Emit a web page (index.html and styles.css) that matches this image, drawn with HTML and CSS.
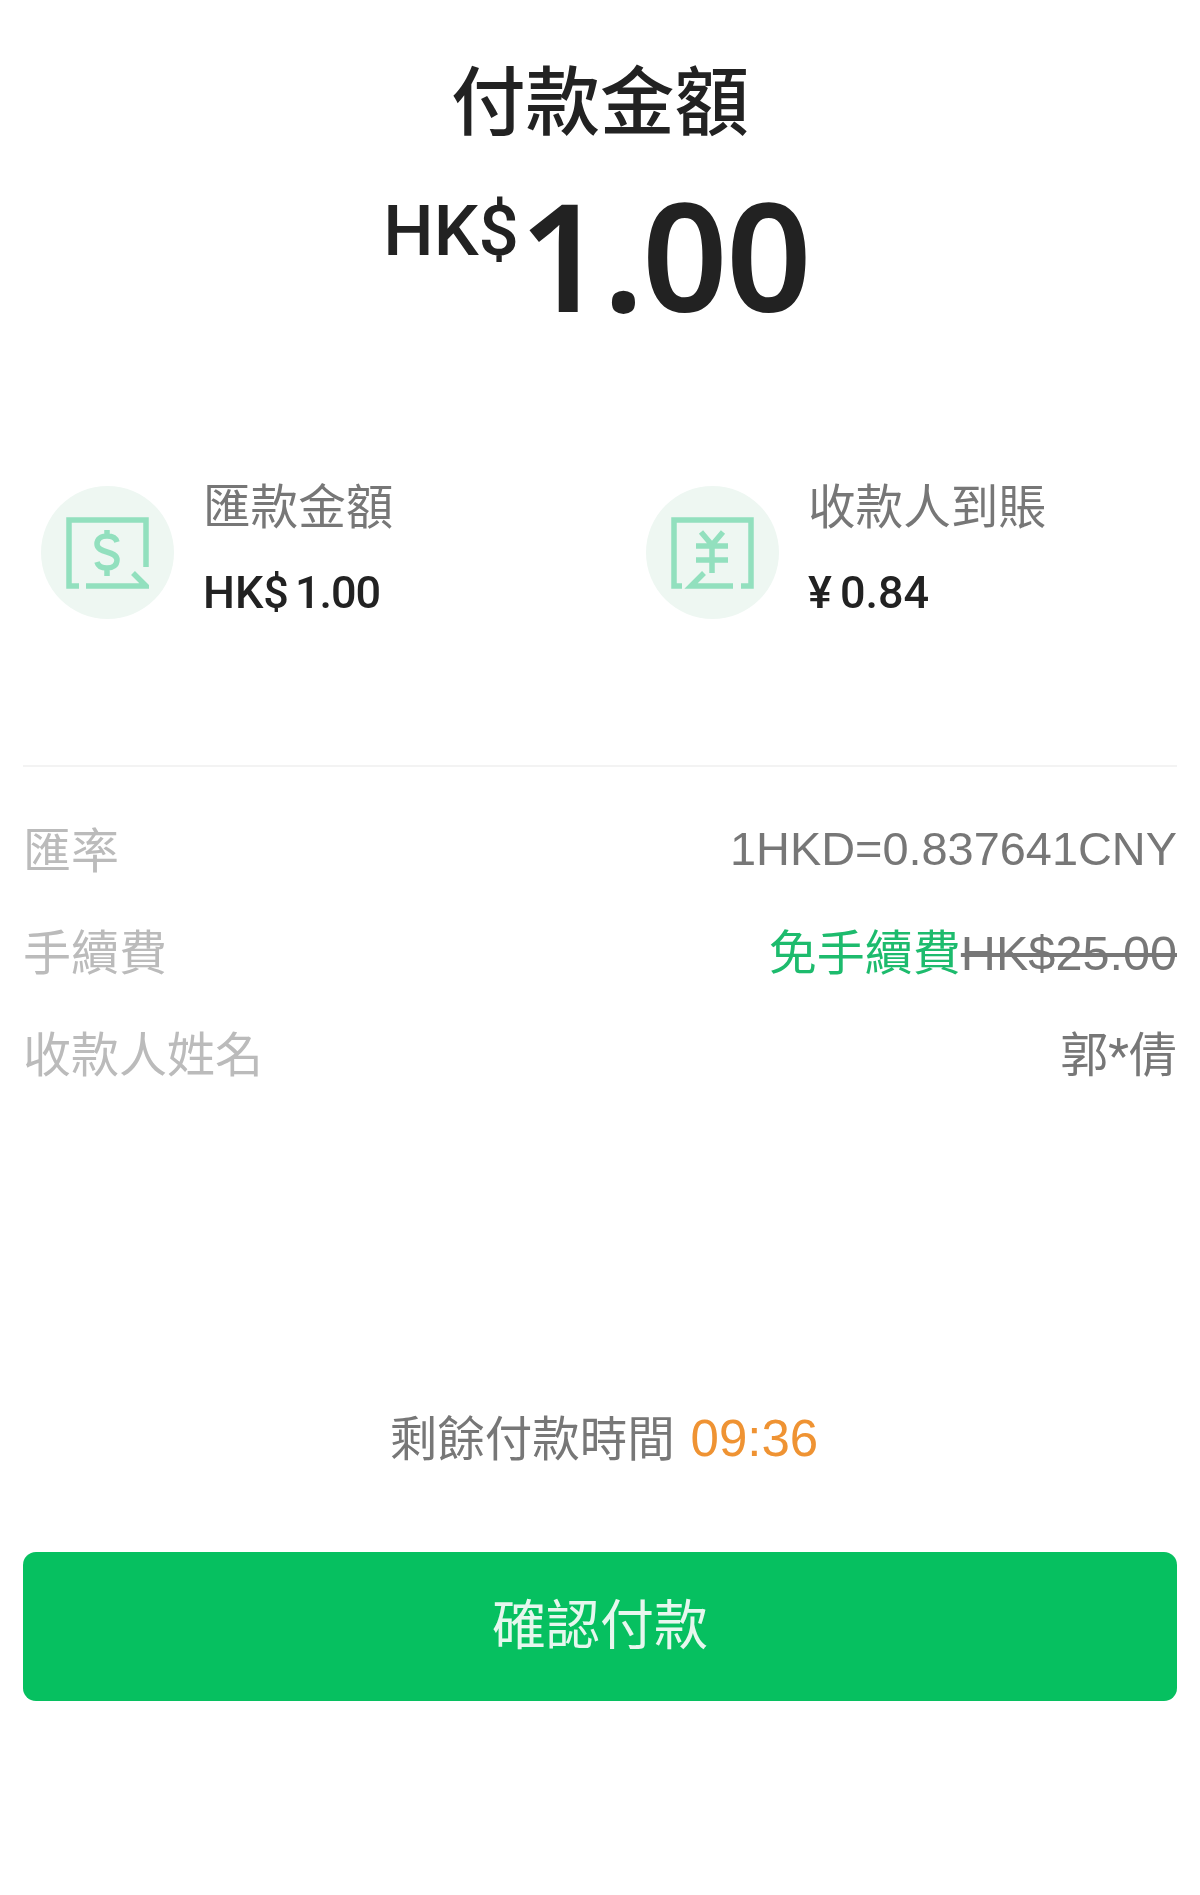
FILE: index.html
```html
<!DOCTYPE html>
<html lang="zh-Hant">
<head>
<meta charset="utf-8">
<title>付款金額</title>
<link rel="stylesheet" href="styles.css">
</head>
<body>
<main class="page">
  <header class="head">
    <h1 class="title">付款金額</h1>
    <div class="amount"><span class="cur">HK$</span><span class="num">1.00</span></div>
  </header>
  <section class="summary">
    <div class="item">
      <div class="badge">
        <svg class="icon" viewBox="0 0 83 72" aria-hidden="true">
          <path class="frame" d="M13 69H3V3H80V50"/>
          <path class="frame" d="M20 69H80L67 56"/>
          <path class="frame" d="M51 25c-1-4-5-6-10-6-6 0-10 3-10 8 0 10 20 6 20 16 0 5-4 8-10 8-5 0-9-2-10-6M41 13v6M41 51v8"/>
        </svg>
      </div>
      <div class="info"><div class="label">匯款金額</div><div class="value">HK$<span class="gap">1.00</span></div></div>
    </div>
    <div class="item">
      <div class="badge">
        <svg class="icon" viewBox="0 0 83 72" aria-hidden="true">
          <path class="frame" d="M11 69H3V3H80V69H70"/>
          <path class="frame" d="M62 69H20L33 56"/>
          <path class="frame" d="M30 15L41 28L52 15M25 29H57M25 43H57M41 28V56"/>
        </svg>
      </div>
      <div class="info"><div class="label">收款人到賬</div><div class="value">¥<span class="gap-wide">0.84</span></div></div>
    </div>
  </section>
  <section class="rows">
    <div class="row"><span class="key">匯率</span><span class="val rate">1HKD=0.837641CNY</span></div>
    <div class="row"><span class="key">手續費</span><span class="val"><span class="free">免手續費</span><s>HK$25.00</s></span></div>
    <div class="row"><span class="key">收款人姓名</span><span class="val">郭*倩</span></div>
  </section>
  <p class="timer">剩餘付款時間 <span class="time">09:36</span></p>
  <button class="pay" type="button">確認付款</button>
</main>
</body>
</html>
```
FILE: styles.css
```css
* { box-sizing: border-box; }
html, body { margin: 0; background: #fff; }
body { font-family: Roboto, "Noto Sans CJK TC", sans-serif; }
.page { width: 1200px; height: 1895px; padding: 0 23px; display: flex; flex-direction: column; filter: blur(0.6px); }
.head { display: flex; flex-direction: column; align-items: center; padding-top: 58px; }
.title { margin: 0; font-size: 74.5px; line-height: 92px; font-weight: 500; color: #222; }
.amount { display: flex; align-items: flex-start; margin: 40px 7px 0 0; height: 130px; color: #222; }
.cur { font-size: 71px; line-height: 81px; font-weight: 500; }
.num { font-family: "Noto Sans", sans-serif; font-size: 150px; line-height: 128px; font-weight: 600; letter-spacing: -2px; }
.summary { display: grid; grid-template-columns: 605px 1fr; margin-top: 163px; padding-left: 18px; }
.item { display: flex; align-items: center; gap: 29px; }
.badge { width: 133px; height: 133px; border-radius: 50%; background: #eef7f2; display: flex; align-items: center; justify-content: center; }
.icon { width: 83px; height: 72px; }
.frame { fill: none; stroke: #92e0be; stroke-width: 5.5; }
.info { display: flex; flex-direction: column; gap: 35px; margin-bottom: 4px; }
.label { font-size: 47.6px; line-height: 50px; color: #777; }
.value { font-size: 45px; line-height: 50px; font-weight: 500; color: #222; }
.gap { margin-left: 6px; letter-spacing: -1px; }
.gap-wide { margin-left: 8px; }
.rows { margin-top: 143px; border-top: 2px solid #f3f3f3; padding-top: 29px; display: flex; flex-direction: column; }
.row { height: 102px; display: flex; justify-content: space-between; align-items: center; font-size: 48px; }
.key { color: #bbb; }
.val { color: #777; }
.val s { font-family: "Liberation Sans", sans-serif; font-size: 48.6px; }
.rate { font-family: "Liberation Sans", sans-serif; font-size: 46.9px; padding-top: 4px; }
.free { color: #1dbb6d; }
.timer { margin: 305px 0 0; padding-left: 8px; text-align: center; font-size: 47.5px; line-height: 64px; color: #777; }
.time { color: #ef9333; font-family: "Liberation Sans", sans-serif; font-size: 51px; margin-left: 4px; }
.pay { margin-top: 80px; height: 149px; width: 100%; border: 0; border-radius: 13px; padding: 0 0 10px; background: #06c060; color: #e6f7ee; font: 400 54px Roboto, "Noto Sans CJK TC", sans-serif; }
```
